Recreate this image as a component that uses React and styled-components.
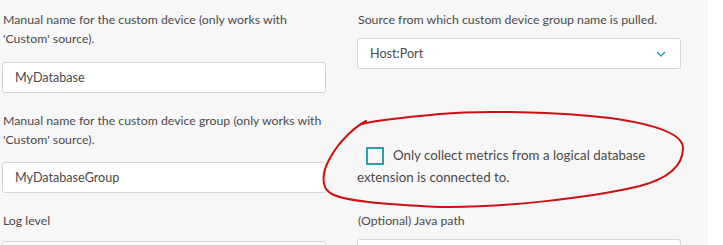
import React from "react";
import styled, { createGlobalStyle } from "styled-components";

const Global = createGlobalStyle`
  html, body { margin: 0; padding: 0; background: #ffffff; }
  body { font-family: Lato, "Noto Sans", sans-serif; }
`;

const Page = styled.div`
  display: flex;
  width: 723px;
  height: 245px;
  overflow: hidden;
`;

const Main = styled.div`
  position: relative;
  width: 708px;
  flex: none;
  background: #f7f7f7;
  padding: 10px 0 0 2px;
  box-sizing: border-box;
`;

const Grid = styled.div`
  display: grid;
  grid-template-columns: 324px 324px;
  column-gap: 31px;
  row-gap: ${(p) => p.$rowGap || 18}px;
  align-items: start;
`;

const Field = styled.div`
  display: flex;
  flex-direction: column;
  gap: ${(p) => p.$gap}px;
`;

const Label = styled.div`
  font-size: 12.3px;
  line-height: 19px;
  color: #4a4a4a;
  padding-left: 1px;
  white-space: nowrap;
`;

const Input = styled.div`
  height: 31px;
  box-sizing: border-box;
  background: #ffffff;
  border: 1px solid #d6d6d6;
  border-radius: 3px;
  padding: 0 12px;
  display: flex;
  align-items: center;
  justify-content: space-between;
  font-size: 12.6px;
  color: #4a4a4a;
`;

const Chevron = styled.svg`
  width: 10px;
  height: 6px;
  margin-right: 2px;
`;

const CheckText = styled.p`
  margin: 33px 0 0 0;
  font-size: 13.3px;
  line-height: 22px;
  color: #4a4a4a;
  white-space: nowrap;
`;

const Box = styled.span`
  display: inline-block;
  width: 18px;
  height: 18px;
  box-sizing: border-box;
  border: 2px solid #2f9ea6;
  vertical-align: -5px;
  margin: 0 9px 0 9px;
`;

const Scribble = styled.svg`
  position: absolute;
  left: 0;
  top: 0;
  width: 708px;
  height: 245px;
  pointer-events: none;
`;

export default function App() {
  return (
    <Page>
      <Global />
      <Main>
        <Grid>
          <Field $gap={14}>
            <Label>
              Manual name for the custom device (only works with
              <br />
              'Custom' source).
            </Label>
            <Input>MyDatabase</Input>
          </Field>
          <Field $gap={9}>
            <Label>Source from which custom device group name is pulled.</Label>
            <Input>
              Host:Port
              <Chevron viewBox="0 0 10 6">
                <path d="M1 1 L5 5 L9 1" fill="none" stroke="#1aa0b0" strokeWidth="1.4" />
              </Chevron>
            </Input>
          </Field>
          <Field $gap={13}>
            <Label>
              Manual name for the custom device group (only works with
              <br />
              'Custom' source).
            </Label>
            <Input>MyDatabaseGroup</Input>
          </Field>
          <CheckText>
            <Box />
            Only collect metrics from a logical database
            <br />
            extension is connected to.
          </CheckText>
          <Field $gap={11}>
            <Label>Log level</Label>
            <Input />
          </Field>
          <Field $gap={9}>
            <Label>(Optional) Java path</Label>
            <Input />
          </Field>
        </Grid>
        <Scribble viewBox="0 0 708 245">
          <path
            d="M366 121 C355 127, 340 140, 330 158 C322 172, 320 188, 332 194 C345 201, 380 204, 440 207 C500 208, 590 198, 640 186 C670 178, 683 165, 683 148 C683 135, 660 125, 610 118 C560 112, 480 110, 440 114 C410 117, 380 119, 362 124"
            fill="none"
            stroke="#cc1111"
            strokeWidth="2"
            strokeLinecap="round"
          />
        </Scribble>
      </Main>
    </Page>
  );
}
